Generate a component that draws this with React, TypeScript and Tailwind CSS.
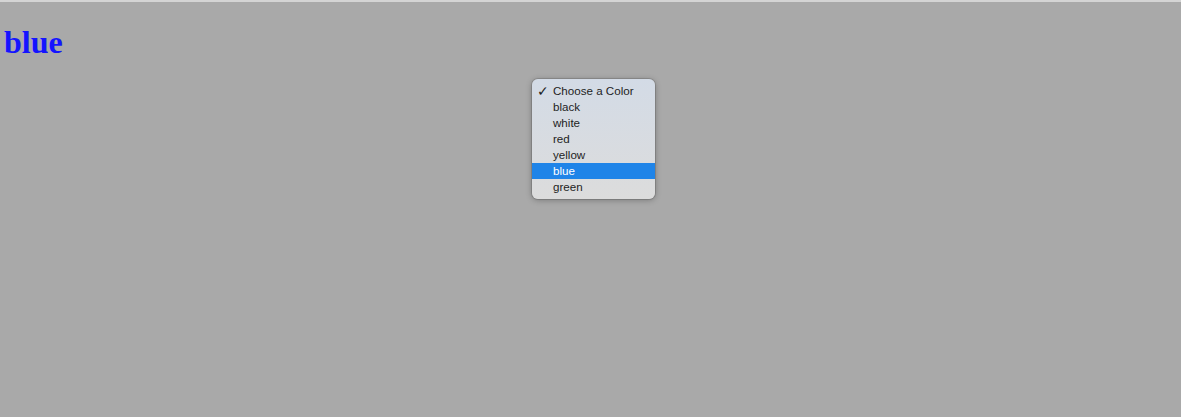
export default function App() {
  const items = ["Choose a Color", "black", "white", "red", "yellow", "blue", "green"];
  return (
    <div className="w-[1181px] h-[417px] bg-[#a9a9a9] border-t-2 border-[#d4d4d4] relative overflow-hidden">
      <h1 className="m-0 pt-[22px] pl-[4px] text-[32px] font-bold text-[#1414ff] leading-[37px]" style={{ fontFamily: '"Liberation Serif", serif' }}>
        blue
      </h1>
      <div
        className="absolute left-[532px] top-[77px] w-[123px] h-[120px] rounded-[6px] py-[4px] shadow-[0_1px_6px_rgba(0,0,0,0.3),0_0_0_1px_rgba(0,0,0,0.12)] bg-gradient-to-b from-[#d3dbe6] to-[#dcdcdc]"
        style={{ fontFamily: '"Liberation Sans", Arial, sans-serif' }}
      >
        {items.map((it) => {
          const sel = it === "blue";
          return (
            <div
              key={it}
              className={`h-[16px] flex items-center text-[11.6px] leading-[16px] ${sel ? "bg-[#1f84e8] text-white" : "text-[#1e1e1e]"}`}
            >
              <span className="w-[21px] pl-[5px] text-[14px] leading-[16px]">{it === "Choose a Color" ? "✓" : ""}</span>
              <span>{it}</span>
            </div>
          );
        })}
      </div>
    </div>
  );
}
